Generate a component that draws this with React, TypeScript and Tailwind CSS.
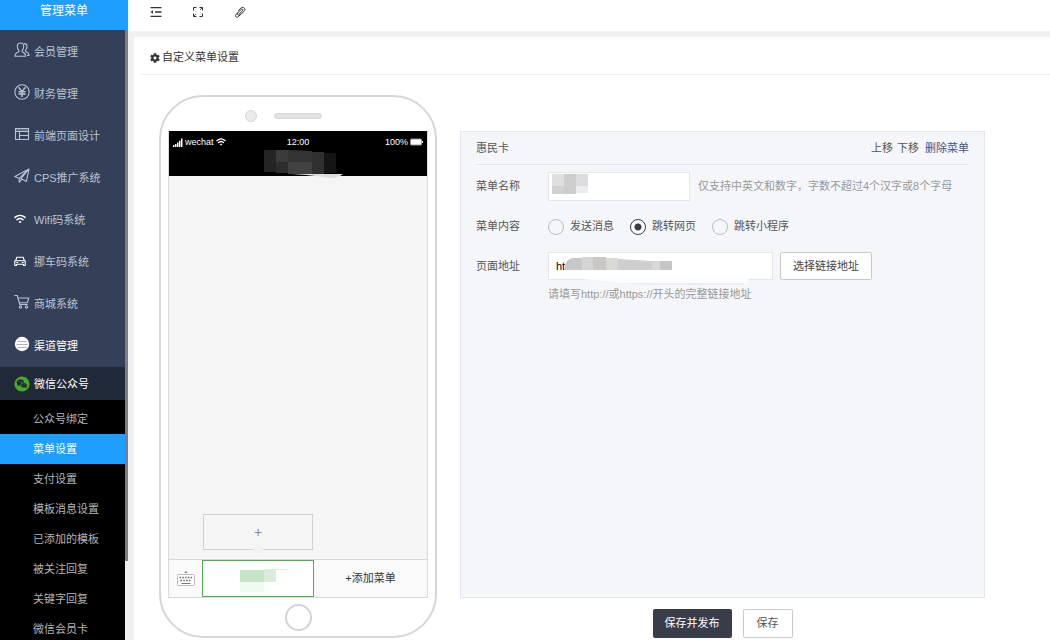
import React from "react";
import { FaCog } from "react-icons/fa";

type IconProps = { className?: string };

const line = {
  fill: "none",
  stroke: "currentColor",
  strokeLinecap: "round" as const,
  strokeLinejoin: "round" as const,
};

function MembersIcon() {
  return (
    <svg viewBox="0 0 16 16" className="size-4" {...line} strokeWidth="1.1" aria-hidden="true">
      <path d="M1 14.200h10.600c0-2.400-1-3.400-3-4.200-.7-.4-.7-1.200-.2-1.900C9.300 7 9.700 5.800 9.700 4.500 9.700 2.400 8.500 1 6.500 1S3.300 2.400 3.300 4.500c0 1.300.4 2.500 1.300 3.600.5.700.5 1.500-.2 1.900C2 10.800 1 11.800 1 14.200z" />
      <path d="M10.400 1.600c1.700.2 2.600 1.500 2.600 3.200 0 1.300-.5 2.200-1.200 3.200-.5.700-.4 1.300.3 1.700 2 .8 2.900 1.800 2.900 3.800h-1.600" />
    </svg>
  );
}

function YenIcon() {
  return (
    <svg viewBox="0 0 16 16" className="size-4" {...line} aria-hidden="true">
      <circle cx="8" cy="8" r="7.200" strokeWidth="1.100" />
      <path d="M5 3.800 8 7.600l3-3.800M8 7.600v4.800M5 7.800h6M5 10h6" strokeWidth="1.500" />
    </svg>
  );
}

function LayoutIcon() {
  return (
    <svg viewBox="0 0 16 16" className="size-4" {...line} strokeWidth="1.100" aria-hidden="true">
      <path d="M1.500 2.500h13v11h-13zM1.500 5.500h13M5.500 5.500v8M5.500 9.500h9" />
      <path d="M2 4h12" strokeWidth=".7" />
    </svg>
  );
}

function PlaneIcon() {
  return (
    <svg viewBox="0 0 16 16" className="size-4" {...line} strokeWidth="1.100" aria-hidden="true">
      <path d="M15 1 .8 8.400l4.400 2L15 1zM15 1l-2.600 12.400-4.200-2.200M15 1 6.800 10.800M5.200 10.400v3.900l2.600-3.100" />
    </svg>
  );
}

function WifiIcon({ className = "size-3" }: IconProps) {
  return (
    <svg viewBox="0 0 12 12" className={className} {...line} strokeWidth="1.500" aria-hidden="true">
      <path d="M1 4.400c3-2.700 7-2.700 10 0M3 6.700c2-1.700 4-1.700 6 0" />
      <circle cx="6" cy="9" r=".8" fill="currentColor" strokeWidth=".6" />
    </svg>
  );
}

function CarIcon() {
  return (
    <svg viewBox="0 0 12 12" className="size-3" {...line} strokeWidth="1.100" aria-hidden="true">
      <path d="M1.800 5.500 2.800 2.200h6.400l1 3.300M.8 5.800h10.400v4.700H9.500V9.300h-7v1.200H.8zM2.800 7.500h1M8.200 7.500h1" />
    </svg>
  );
}

function CartIcon() {
  return (
    <svg viewBox="0 0 16 16" className="size-4" {...line} strokeWidth="1.100" aria-hidden="true">
      <path d="M.8 1.500h2.400l2.600 9h7.400M3.900 4h10.900l-1.500 4.700H5.300" />
      <circle cx="6.500" cy="12.900" r="1.200" />
      <circle cx="12.500" cy="12.900" r="1.200" />
    </svg>
  );
}

function ChannelIcon() {
  return (
    <svg viewBox="0 0 16 16" className="size-4" aria-hidden="true">
      <circle cx="8" cy="8" r="7.200" fill="#fff" />
      <path d="M3.500 5.500h9M2.500 8.500h11M3.500 11.500h9" stroke="#a9b3c6" />
    </svg>
  );
}

function WechatIcon() {
  return (
    <svg viewBox="0 0 16 16" className="size-4" aria-hidden="true">
      <circle cx="8" cy="8" r="7.600" fill="#49a92b" />
      <ellipse cx="6.400" cy="6.500" rx="3.700" ry="2.900" fill="#202938" />
      <path d="m3.800 8-.3 1.900 2-1z" fill="#202938" />
      <ellipse cx="10" cy="9.300" rx="3.300" ry="2.600" fill="#202938" stroke="#49a92b" strokeWidth=".7" />
      <path d="m11.300 11.300 1.300 1-.2-1.900z" fill="#202938" />
      <g fill="#49a92b">
        <circle cx="5.100" cy="5.700" r=".5" />
        <circle cx="7.700" cy="5.700" r=".5" />
        <circle cx="8.900" cy="8.800" r=".4" />
        <circle cx="11.100" cy="8.800" r=".4" />
      </g>
    </svg>
  );
}

function FoldIcon() {
  return (
    <svg viewBox="0 0 12 12" className="size-3" fill="none" stroke="currentColor" strokeWidth="1.300" aria-hidden="true">
      <path d="M.5 1.700h11M5 6h6.500M.5 10.300h11" />
      <path d="M3 4.200.5 6 3 7.800z" fill="currentColor" stroke="none" />
    </svg>
  );
}

function FullscreenIcon() {
  return (
    <svg viewBox="0 0 12 12" className="size-3" fill="none" stroke="currentColor" aria-hidden="true">
      <path d="M1.500 4.500v-3h3M7.500 1.500h3v3M10.500 7.500v3h-3M4.500 10.500h-3v-3" />
      <path d="m10.500 1.500-2.500 2.500M1.500 10.500 4 8" strokeWidth=".8" />
    </svg>
  );
}

function LinkIcon() {
  return (
    <svg viewBox="0 0 12 12" className="size-3" {...line} strokeWidth="1" aria-hidden="true">
      <path d="M5 8.200 8.600 4.800c1-1.100-.3-2.300-1.400-1.300L3.900 6.600C2.200 8.400 4.300 10.400 6 8.700" />
      <path d="M3.900 6.600 2 8.400c-1.600 1.800.6 3.800 2.400 2.200l5.600-5.200c2.400-2.500-.6-5.400-3.200-3.200L4.500 4.300" />
    </svg>
  );
}

function KeyboardIcon() {
  return (
    <svg viewBox="0 0 20 18" className="h-[18px] w-5" fill="none" aria-hidden="true">
      <path d="m8.500 3 1.500-2 1.500 2z" fill="#777" />
      <rect x="1.500" y="4.500" width="17" height="11" rx="1" fill="#fff" stroke="#bbb" />
      <path d="M3.500 7.500h13M4.500 10.500h11" stroke="#666" strokeWidth="1.500" strokeDasharray="1.500 1.300" />
      <path d="M5.500 13.500h9" stroke="#777" />
    </svg>
  );
}

const menu = [
  { label: "会员管理", icon: <MembersIcon /> },
  { label: "财务管理", icon: <YenIcon /> },
  { label: "前端页面设计", icon: <LayoutIcon /> },
  { label: "CPS推广系统", icon: <PlaneIcon /> },
  { label: "Wifi码系统", icon: <WifiIcon />, bright: true },
  { label: "挪车码系统", icon: <CarIcon />, bright: true },
  { label: "商城系统", icon: <CartIcon /> },
  { label: "渠道管理", icon: <ChannelIcon />, active: true },
];

const subMenu = ["公众号绑定", "菜单设置", "支付设置", "模板消息设置", "已添加的模板", "被关注回复", "关键字回复", "微信会员卡"];

function Sidebar() {
  return (
    <aside className="flex w-32 shrink-0 flex-col overflow-hidden">
      <h1 className="h-[30px] shrink-0 bg-[#1e9fff] pt-0.5 text-center text-xs leading-[18px] text-white">管理菜单</h1>
      <div className="flex min-h-0 flex-1 bg-[#f0f0f0]">
        <nav className="flex-1 overflow-hidden bg-black">
          <ul className="bg-[#344058] pb-px">
            {menu.map((m) => (
              <li key={m.label}>
                <a
                  href="#"
                  className={
                    m.active
                      ? "flex h-[42px] items-center pl-3.5 text-white"
                      : "flex h-[42px] items-center pl-3.5 text-[#bac3d2]"
                  }
                >
                  <span className={m.bright ? "w-5 text-white" : "w-5 pb-0.5"}>{m.icon}</span>
                  <span className="pt-0.5">{m.label}</span>
                </a>
              </li>
            ))}
          </ul>
          <a href="#" className="flex h-[33px] items-center bg-[#202938] pl-3.5 text-white">
            <span className="w-5">
              <WechatIcon />
            </span>
            <span className="pt-0.5">微信公众号</span>
          </a>
          <ul className="pt-1">
            {subMenu.map((s) => (
              <li key={s}>
                <a
                  href="#"
                  className={
                    s === "菜单设置"
                      ? "flex h-[30px] items-center bg-[#1e9fff] pl-[33px] text-white"
                      : "flex h-[30px] items-center pl-[33px] text-[#b5b5b5]"
                  }
                >
                  {s}
                </a>
              </li>
            ))}
          </ul>
        </nav>
        <div className="w-[3px]">
          <div className="h-[87%] bg-[#7d7d82]" />
        </div>
      </div>
    </aside>
  );
}

function Phone() {
  return (
    <section className="flex w-[278px] shrink-0 flex-col rounded-[44px] border-2 border-[#d6d6d6] bg-white px-[7px]">
      <div className="flex h-[34px] items-center gap-[17px] pt-1 pl-[77px]">
        <span className="size-3 rounded-full border border-[#d6d6d6] bg-[#ebebeb]" />
        <span className="h-1.5 w-12 rounded-full border border-[#d6d6d6] bg-[#e2e2e2]" />
      </div>
      <div className="flex h-[467px] flex-col border-x border-b border-[#d9d9d9] bg-[#f5f5f5]">
        <div className="relative h-[45px] bg-black text-[9px] leading-[22px] text-white">
          <div className="grid grid-cols-3 px-1">
            <span className="flex items-center gap-0.5">
              <svg viewBox="0 0 10 9" className="h-[9px] w-2.5" fill="currentColor" aria-hidden="true">
                <path d="M0 7h1.500v2H0zM2 6h1.500v3H2zM4 4.500h1.500V9H4zM6 2.800h1.500V9H6zM8 .5h1.500V9H8z" />
              </svg>
              <span className="font-medium">wechat</span>
              <WifiIcon className="size-2.5" />
            </span>
            <span className="text-center">12:00</span>
            <span className="flex items-center justify-end gap-0.5">
              100%
              <svg viewBox="0 0 13 8" className="h-2 w-[13px]" aria-hidden="true">
                <rect x=".5" y="1" width="11" height="6" rx="1" fill="#fff" stroke="#999" />
                <path d="M12.500 3v2" stroke="#fff" />
              </svg>
            </span>
          </div>
          <svg viewBox="0 0 80 30" className="absolute top-[18px] left-[95px] h-[30px] w-20" aria-hidden="true">
            <path d="M0 1h12v22H0z" fill="#242424" />
            <path d="M12 1h12v12H12z" fill="#3b3b3b" />
            <path d="M12 13h12v11H12z" fill="#2d2d2d" />
            <path d="M24 1l24 1v11H24z" fill="#343434" />
            <path d="M24 13h24v12H24z" fill="#414141" />
            <path d="M48 3h12v22H48z" fill="#303030" />
            <path d="M60 4h12v20H60z" fill="#151515" />
            <path d="M28 25h51c-5 4-12 5-19 3l-18-2z" fill="#dedede" />
          </svg>
        </div>
        <div className="flex flex-1 flex-col justify-end pb-[9px] pl-[34px]">
          <button type="button" aria-label="添加子菜单" className="relative h-9 w-[110px] border border-[#cfcfcf] text-sm text-[#8b8b98]">
            +
            <span className="absolute -bottom-1 left-[50px] size-2 rotate-45 bg-[#f2f2f2]" />
          </button>
        </div>
        <div className="flex h-[38px] border-t border-[#d9d9d9] bg-[#fafafa]">
          <div className="flex w-[33px] items-center justify-center">
            <KeyboardIcon />
          </div>
          <button type="button" aria-label="惠民卡" className="flex w-28 items-center justify-center border border-[#4caf50] bg-white">
            <svg viewBox="0 0 62 26" className="h-[26px] w-[62px]" aria-hidden="true">
              <path d="M13 4h24v12H13z" fill="#c5e6c6" />
              <path d="M37 3h12v13H37z" fill="#d9eeda" />
              <path d="M49 3h12v1H49z" fill="#d9eeda" />
              <path d="M13 16h24v10H13z" fill="#f0f9f0" />
            </svg>
          </button>
          <button type="button" className="flex-1 text-[#333]">+添加菜单</button>
        </div>
      </div>
      <div className="flex justify-center pt-1.5 pb-1">
        <span className="size-[27px] rounded-full border-2 border-[#d3d3d3]" />
      </div>
    </section>
  );
}

function Choice({ label, checked }: { label: string; checked?: boolean }) {
  return (
    <label className="flex items-center gap-1.5">
      <input
        type="radio"
        name="content"
        defaultChecked={checked}
        className="size-4 appearance-none rounded-full border border-[#b9bcc2] bg-[#f4f6f9] checked:border-[#393d49] checked:bg-[radial-gradient(circle,#393d49_3px,#fff_4px)]"
      />
      {label}
    </label>
  );
}

function Editor() {
  return (
    <section className="min-h-[467px] border border-[#e2e5eb] bg-[#f4f6f9] px-[15px] text-[#555]">
      <header className="flex h-[33px] items-center justify-between border-b border-[#e2e5eb]">
        <h3>惠民卡</h3>
        <div className="flex gap-1">
          <a href="#">上移</a>
          <a href="#">下移</a>
          <a href="#" className="pl-0.5 text-[#44548a]">删除菜单</a>
        </div>
      </header>
      <div className="grid grid-cols-[72px_1fr] pt-[7px]">
        <label htmlFor="name" className="leading-7">菜单名称</label>
        <div className="flex items-center gap-2">
          <div className="relative">
            <input id="name" className="block h-[29px] w-[142px] border border-[#e3e5e9] bg-white px-2" />
            <svg viewBox="0 0 36 20" className="absolute top-0.5 left-1 h-5 w-9" aria-hidden="true">
              <path d="M0 0h12v12H0z" fill="#dfdfdf" />
              <path d="M12 0h12v20H12z" fill="#cdcdcd" />
              <path d="M24 0h12v12H24z" fill="#dcdcde" />
              <path d="M0 12h12v8H0z" fill="#d1d1d1" />
              <path d="M24 12h12v7H24z" fill="#ececee" />
            </svg>
          </div>
          <span className="whitespace-nowrap text-[#999]">仅支持中英文和数字，字数不超过4个汉字或8个字母</span>
        </div>
        <span className="leading-[51px]">菜单内容</span>
        <div className="flex items-center gap-4">
          <Choice label="发送消息" />
          <Choice label="跳转网页" checked />
          <Choice label="跳转小程序" />
        </div>
        <label htmlFor="url" className="leading-7">页面地址</label>
        <div>
          <div className="flex gap-[7px]">
            <div className="relative">
              <input id="url" defaultValue="ht" className="block h-7 w-[225px] border border-[#e3e5e9] bg-white px-[7px] text-black" />
              <svg viewBox="0 0 200 30" className="absolute top-1 left-4 h-[30px] w-[200px]" aria-hidden="true">
                <path d="M0 14C1 6 4 2 10 2h8v12z" fill="#c8c8c8" />
                <path d="M18 1h11v13H18z" fill="#d5d5d5" />
                <path d="M29 1h13v13H29z" fill="#c9c8c6" />
                <path d="M42 2h12v12H42z" fill="#dad8d2" />
                <path d="M54 3l34 2v9H54z" fill="#cecece" />
                <path d="M88 5h20v9H88z" fill="#d8d8d8" />
                <path d="M96 5h12v9H96z" fill="#c6c6c6" />
                <path d="M8 22h178l-4 6H70z" fill="#fdfdfe" />
                <path d="M50 27h130v2H90z" fill="#eaecef" />
              </svg>
            </div>
            <button type="button" className="h-7 w-[92px] rounded-xs border border-[#c9c9c9] bg-white text-[#444]">选择链接地址</button>
          </div>
          <p className="pt-1.5 leading-4 text-[#999]">请填写http://或https://开头的完整链接地址</p>
        </div>
      </div>
    </section>
  );
}

export default function App() {
  return (
    <div className="flex h-screen overflow-hidden bg-[#f0f0f0] font-['Liberation_Sans','Noto_Sans_CJK_SC',sans-serif] text-[11px] text-[#333]">
      <Sidebar />
      <div className="flex min-w-0 flex-1 flex-col">
        <div className="flex h-[31px] shrink-0 gap-[30px] bg-white pt-1.5 pl-[22px]">
          <button type="button" aria-label="收起菜单" className="size-3">
            <FoldIcon />
          </button>
          <button type="button" aria-label="全屏" className="size-3">
            <FullscreenIcon />
          </button>
          <button type="button" aria-label="链接" className="size-3">
            <LinkIcon />
          </button>
        </div>
        <main className="mt-1.5 ml-1.5 flex-1 bg-white pl-[7px]">
          <h2 className="flex h-[38px] items-center gap-0.5 border-b border-[#eee] pt-1 pl-[9px]">
            <FaCog className="size-2.5" />
            自定义菜单设置
          </h2>
          <div className="flex gap-[23px] pt-5 pr-[65px] pl-[18px]">
            <Phone />
            <div className="min-w-0 flex-1 pt-9">
              <Editor />
              <div className="flex justify-center gap-[11px] pt-[11px]">
                <button type="button" className="h-[29px] w-[79px] rounded-xs bg-[#393d49] text-white">保存并发布</button>
                <button type="button" className="h-[29px] w-[50px] rounded-xs border border-[#c9c9c9] bg-white text-[#555]">保存</button>
              </div>
            </div>
          </div>
        </main>
      </div>
    </div>
  );
}
